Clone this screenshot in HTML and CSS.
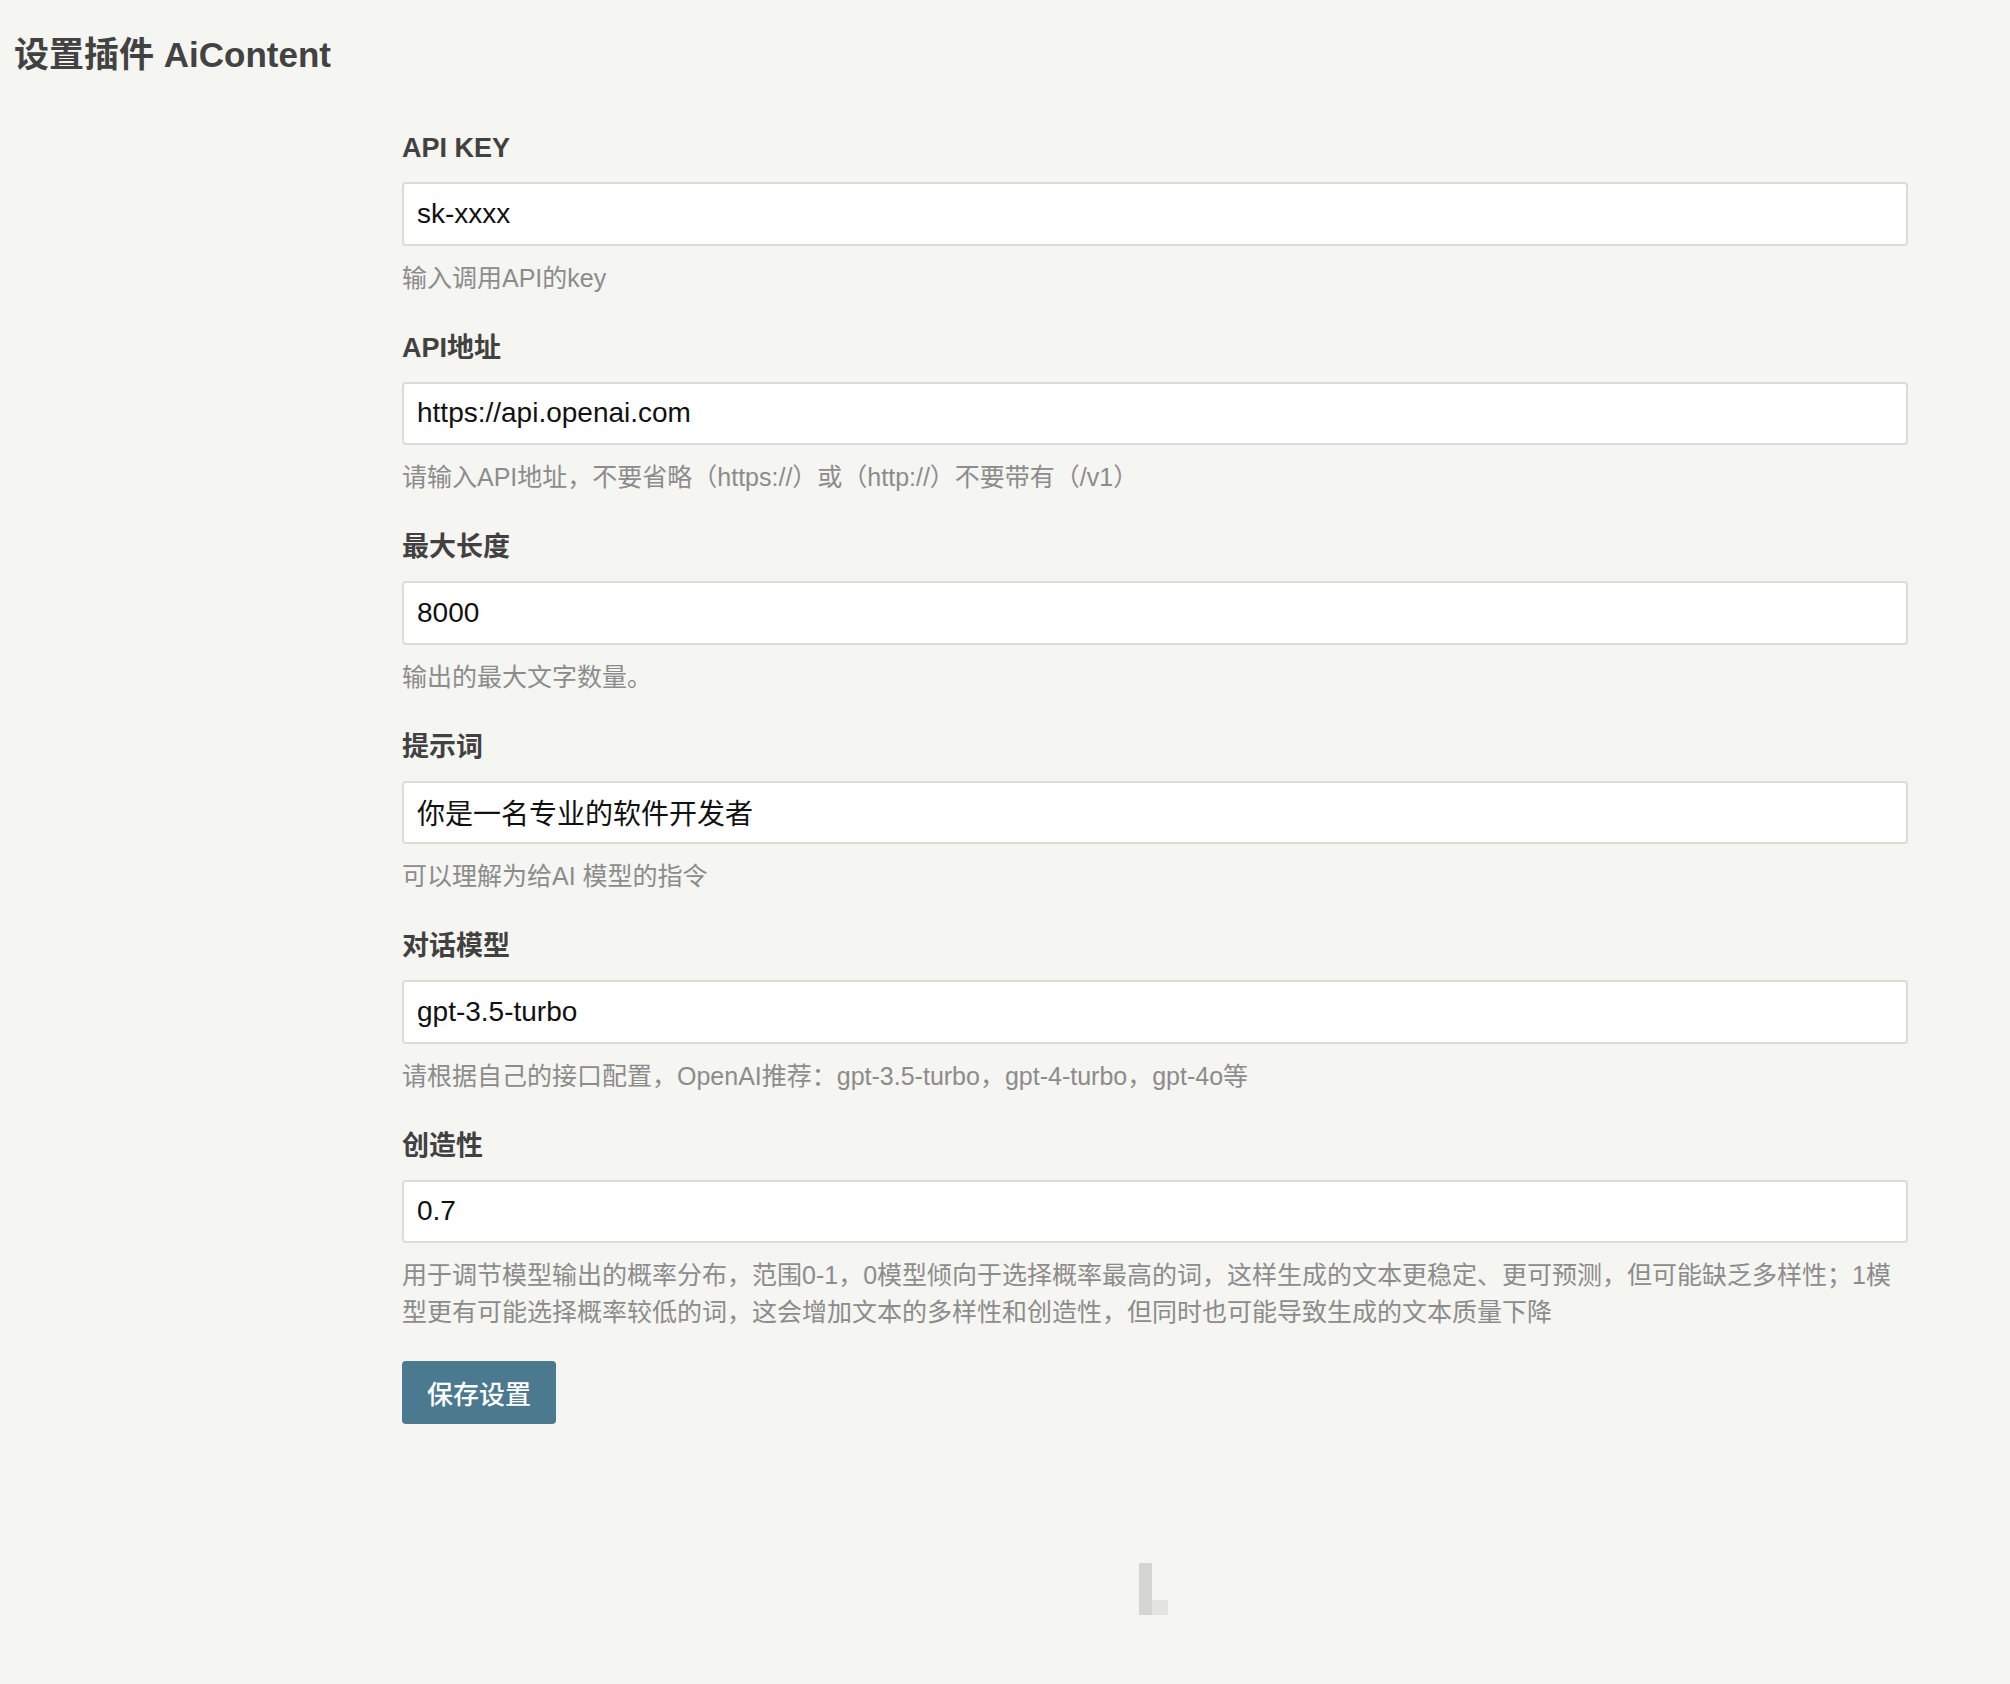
FILE: index.html
```html
<!DOCTYPE html>
<html lang="zh-CN">
<head>
<meta charset="utf-8">
<title>设置插件 AiContent</title>
<link rel="stylesheet" href="styles.css">
</head>
<body>
<div class="wrap">
  <h1 class="title">设置插件 AiContent</h1>
  <form class="form">
    <div class="field">
      <label class="label">API KEY</label>
      <input class="input" type="text" value="sk-xxxx">
      <p class="desc">输入调用API的key</p>
    </div>
    <div class="field">
      <label class="label">API地址</label>
      <input class="input" type="text" value="https://api.openai.com">
      <p class="desc">请输入API地址，不要省略（https://）或（http://）不要带有（/v1）</p>
    </div>
    <div class="field">
      <label class="label">最大长度</label>
      <input class="input" type="text" value="8000">
      <p class="desc">输出的最大文字数量。</p>
    </div>
    <div class="field">
      <label class="label">提示词</label>
      <input class="input" type="text" value="你是一名专业的软件开发者">
      <p class="desc">可以理解为给AI 模型的指令</p>
    </div>
    <div class="field">
      <label class="label">对话模型</label>
      <input class="input" type="text" value="gpt-3.5-turbo">
      <p class="desc">请根据自己的接口配置，OpenAI推荐：gpt-3.5-turbo，gpt-4-turbo，gpt-4o等</p>
    </div>
    <div class="field">
      <label class="label">创造性</label>
      <input class="input" type="text" value="0.7">
      <p class="desc">用于调节模型输出的概率分布，范围0-1，0模型倾向于选择概率最高的词，这样生成的文本更稳定、更可预测，但可能缺乏多样性；1模型更有可能选择概率较低的词，这会增加文本的多样性和创造性，但同时也可能导致生成的文本质量下降</p>
    </div>
    <div class="actions">
      <button class="btn" type="button">保存设置</button>
    </div>
  </form>
</div>
<div class="loader"><span class="loader-bar"></span><span class="loader-foot"></span></div>
</body>
</html>
```

FILE: styles.css
```css
html, body {
  margin: 0;
  padding: 0;
  background: #f5f5f1;
}

body {
  font-family: "Liberation Sans", "Noto Sans CJK SC", sans-serif;
  color: #3f3f3f;
  min-height: 1684px;
  position: relative;
}

.wrap {
  padding: 33px 14px 0 14px;
}

.title {
  margin: 0;
  font-size: 35px;
  line-height: 44px;
  font-weight: 700;
  color: #424242;
}

.form {
  margin: 54px 0 0 388px;
  width: 1506px;
  display: flex;
  flex-direction: column;
}

.field {
  display: flex;
  flex-direction: column;
}

.field + .field {
  margin-top: 34px;
}

.label {
  font-size: 27px;
  line-height: 34px;
  font-weight: 700;
  color: #414141;
  margin-bottom: 17px;
}

.input {
  box-sizing: border-box;
  width: 100%;
  height: 63.5px;
  margin: 0;
  padding: 0 13px;
  border: 2px solid #dcdcd7;
  border-radius: 4px;
  background: #ffffff;
  font-family: "Liberation Sans", "Noto Sans CJK SC", sans-serif;
  font-size: 28px;
  color: #111111;
  outline: none;
}

.desc {
  margin: 14px 0 0 0;
  font-size: 25px;
  line-height: 37px;
  color: #8c8c8c;
}

.actions {
  margin-top: 29.5px;
  display: flex;
}

.btn {
  height: 63px;
  padding: 0 25px;
  border: none;
  border-radius: 4px;
  background: #4b7990;
  color: #ffffff;
  font-family: "Liberation Sans", "Noto Sans CJK SC", sans-serif;
  font-size: 26px;
  font-weight: 500;
  cursor: pointer;
}

.loader {
  position: absolute;
  left: 1139px;
  top: 1563px;
  width: 29px;
  height: 52px;
}

.loader-bar {
  position: absolute;
  left: 0;
  top: 0;
  width: 13px;
  height: 52px;
  background: #d5d5d1;
}

.loader-foot {
  position: absolute;
  left: 13px;
  top: 37px;
  width: 16px;
  height: 15px;
  background: #e3e3df;
}
```
